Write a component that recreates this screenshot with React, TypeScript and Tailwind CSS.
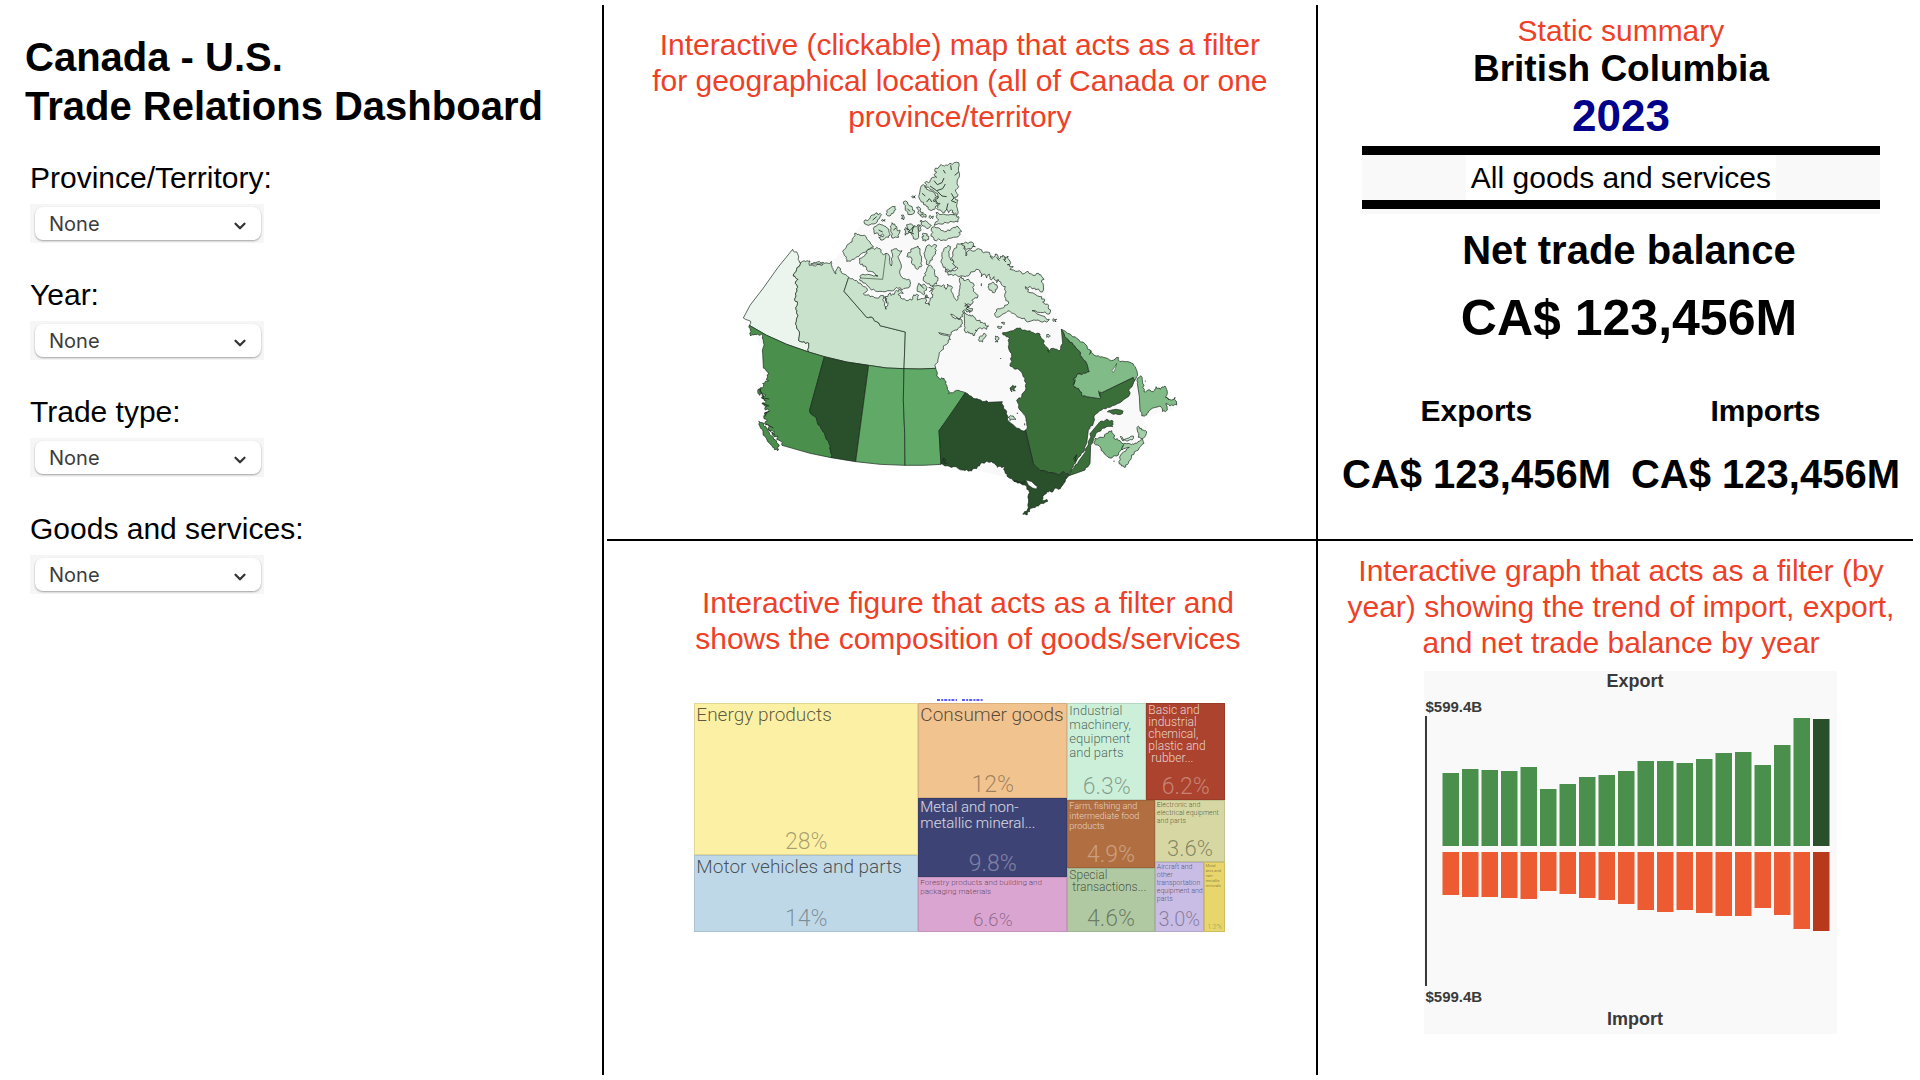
import React from "react";
import { ChevronDown } from "lucide-react";

type Pt = [number, number];

/* ---------- Map ---------- */

const parse = (s: string): Pt[] =>
  s
    .trim()
    .split(/\s+/)
    .map((p) => p.split(",").map(Number) as Pt);

// Breaks up short edges so that coastlines look ragged; long borders stay straight.
// The offset depends only on the edge's two ends, so neighbours share the same line.
function roughPath(points: Pt[], amount: number): string {
  const noise = (n: number) => {
    const v = Math.sin(n * 12.9898) * 43758.5453;
    return (v - Math.floor(v)) * 2 - 1;
  };
  const out: string[] = [];
  points.forEach((a, i) => {
    const b = points[(i + 1) % points.length];
    out.push(`${a[0]},${a[1]}`);
    const len = Math.hypot(b[0] - a[0], b[1] - a[1]);
    if (len > 36 || len < 5) return;
    const flip = a[0] > b[0] || (a[0] === b[0] && a[1] > b[1]);
    const [p, q] = flip ? [b, a] : [a, b];
    const nx = -(q[1] - p[1]) / len;
    const ny = (q[0] - p[0]) / len;
    const steps = len > 14 ? [0.25, 0.5, 0.75] : [0.5];
    const mids = steps.map((t) => {
      const k = noise(p[0] * 0.37 + p[1] * 0.71 + t * 5.3) * amount;
      return `${(p[0] + (q[0] - p[0]) * t + nx * k).toFixed(1)},${(p[1] + (q[1] - p[1]) * t + ny * k).toFixed(1)}`;
    });
    out.push(...(flip ? mids.reverse() : mids));
  });
  return `M${out.join("L")}Z`;
}

const LIGHT = "#c8e2cc";

const water =
  "188,298 208,330 300,338 338,304 372,250 402,214 470,176 520,154 566,140 570,110 612,60 686,38 690,120 688,200 692,250 726,276 760,306 840,318 850,350 942,380 944,424 962,480 990,536 1080,600 1150,630 1222,680 1244,700 1338,750 1330,780 1240,800 1250,850 1180,950 1100,900 1080,960 1010,980 900,1000 700,950 525,946 377,935 156,886 100,810 100,600 60,530";

const regions: { name: string; fill: string; rough: number; d: string[] }[] = [
  {
    name: "Yukon",
    fill: "#ebf5ee",
    rough: 3,
    d: [
      "188,298 202,310 208,333 212,338 200,358 190,378 204,388 196,400 203,412 196,432 194,450 202,455 198,478 204,496 197,520 200,534 208,545 206,572 218,576 236,579 236,606 170,583 110,556 58,526 62,514 52,510 40,504 60,466 100,414 144,352",
    ],
  },
  {
    name: "Northwest Territories",
    fill: LIGHT,
    rough: 3,
    d: [
      "212,338 222,332 240,333 238,346 256,348 280,342 242,342 262,336 284,340 300,340 304,334 306,348 312,362 318,372 324,350 330,354 334,368 356,382 342,424 410,502 430,505 450,527 526,546 524,600 522,656 470,654 416,646 350,636 283,620 236,606 236,579 218,576 206,572 208,545 200,534 197,520 204,496 198,478 202,455 194,450 196,432 203,412 196,400 204,388 190,378 200,358",
      "374,250 390,256 404,256 416,272 430,290 410,304 390,314 372,328 350,334 346,318 338,304 350,288 366,276",
    ],
  },
  {
    name: "Nunavut",
    fill: LIGHT,
    rough: 4,
    d: [
      "356,382 380,392 394,402 410,414 408,426 400,432 420,440 440,444 462,438 460,452 468,478 474,458 466,444 476,432 492,434 496,424 512,420 520,430 504,434 512,444 534,452 548,446 552,434 566,436 562,450 580,446 586,436 592,440 586,456 598,466 600,452 608,442 604,428 612,416 606,408 630,408 640,404 648,418 652,402 664,408 668,430 680,452 688,436 690,414 688,392 694,380 706,392 716,388 730,400 728,412 740,432 742,444 730,448 726,462 704,468 716,474 728,476 720,488 702,480 698,500 690,508 662,492 668,502 684,508 696,510 694,530 684,536 676,540 664,546 662,556 626,548 650,556 660,560 662,568 644,586 636,600 626,620 620,640 617,655 570,657 522,656 524,600 526,546 450,527 430,505 410,502 342,424",
      "430,294 410,304 400,320 388,326 392,344 408,350 410,360 430,366 444,378 420,374 392,376 390,392 410,404 424,420 450,424 480,422 500,412 514,420 530,414 540,404 536,388 516,382 510,360 512,340 504,320 516,302 500,296 484,300 488,320 484,348 480,320 468,310 460,314 450,296",
      "548,296 564,288 570,296 574,330 576,346 562,358 548,344 546,328 530,318 540,308",
      "590,288 620,286 616,306 606,324 598,340 590,344 584,320 586,300",
      "596,346 610,356 614,370 624,384 620,402 600,406 586,396 580,384 588,366",
      "566,400 586,406 590,420 580,434 562,424",
      "642,296 654,286 662,290 656,306 662,330 672,338 680,346 672,356 656,360 640,352 634,330 636,308",
      "680,286 696,280 704,288 708,318 716,300 736,302 746,296 760,308 772,306 780,314 790,322 796,312 808,326 818,316 824,330 834,318 842,338 832,344 850,350 840,358 862,364 884,370 894,364 904,372 916,376 926,370 936,380 942,388 934,396 940,408 940,420 932,426 914,414 886,410 900,428 930,440 944,448 938,456 952,462 962,480 958,492 940,488 906,482 938,498 958,508 950,516 924,510 900,514 876,506 850,490 832,484 812,498 800,502 794,490 800,478 820,474 824,466 836,460 824,440 826,410 812,396 804,388 800,398 792,380 784,390 778,372 770,384 764,372 754,380 750,362 738,358 720,372 706,380 680,376 660,374 646,366 648,358 662,366 684,354 672,344 668,330 668,306",
      "694,282 720,276 736,290 722,296 710,298",
      "686,38 688,70 682,90 686,110 676,120 684,134 674,142 684,150 680,170 684,190 670,194 664,180 656,188 650,176 640,188 620,176 630,160 616,150 624,138 608,120 588,112 584,98 596,98 604,84 620,82 612,74 620,66 614,60 630,46 644,48 660,40",
      "580,104 572,112 566,140 574,156 590,170 600,180 616,174 624,160 610,150 624,140 606,124 590,118",
      "618,188 640,192 670,194 686,200 684,216 660,214 640,222 612,226 626,210",
      "606,232 630,236 650,244 668,234 684,230 692,240 688,256 670,262 640,270 612,270 604,252",
      "570,214 586,212 604,226 596,234 580,228",
      "580,250 592,252 596,268 586,274 576,264",
      "530,224 544,222 552,232 564,224 566,262 550,266 542,248 526,256 522,238 534,240",
      "430,236 448,222 468,230 478,248 476,262 452,270 446,262 462,256 446,256 432,246",
      "486,218 494,222 502,242 510,240 506,262 486,264 482,240",
      "402,214 420,204 436,190 454,194 448,206 430,222 410,224",
      "470,182 496,170 492,186 480,198 468,192",
      "520,156 532,156 548,176 552,190 540,194 526,180",
      "560,172 572,176 578,194 566,192",
      "548,137 556,137 556,144 549,144",
      "514,196 522,200 520,210 514,206",
      "600,196 610,198 608,206 601,206",
      "572,194 588,194 588,202 576,202",
      "566,224 572,226 572,242 566,240",
      "458,208 465,208 465,214 458,214",
      "776,402 788,396 800,404 800,418 788,428 778,420",
      "702,484 716,496 730,500 744,512 760,520 776,528 770,538 752,534 736,540 734,556 720,548 706,546 704,520",
      "752,558 764,550 766,562 758,576 748,574",
      "796,558 804,560 804,576 796,576",
      "804,528 816,530 812,536 804,534",
      "814,518 824,518 822,524",
      "970,506 980,508 978,516 970,514",
      "950,554 957,554 957,562 950,562",
      "834,802 850,798 858,808 840,812",
    ],
  },
  {
    name: "British Columbia",
    fill: "#4a8f4c",
    rough: 3,
    d: [
      "58,526 110,556 170,583 236,606 283,620 239,780 243,792 255,800 262,818 275,838 285,855 297,880 302,900 303,923 240,910 156,886 158,878 150,872 140,868 144,858 132,860 126,848 134,846 116,840 118,828 104,822 112,812 102,806 104,790 118,782 104,776 112,768 96,762 108,752 94,742 108,736 92,730 86,720 100,710 98,700 116,692 108,688 116,672 108,662 100,650 98,610 100,576 94,552 80,554 62,558 60,540",
      "86,814 96,818 108,830 118,848 130,862 140,878 148,888 142,902 128,892 114,876 100,856 98,840 90,828",
      "84,718 92,716 90,736 84,730",
    ],
  },
  {
    name: "Alberta",
    fill: "#294f2b",
    rough: 3,
    d: [
      "283,620 350,636 416,646 377,935 303,923 302,900 297,880 285,855 275,838 262,818 255,800 243,792 239,780",
    ],
  },
  {
    name: "Saskatchewan",
    fill: "#60a967",
    rough: 0,
    d: ["416,646 470,654 522,656 520,750 524,850 525,946 450,943 377,935"],
  },
  {
    name: "Manitoba",
    fill: "#60a967",
    rough: 3,
    d: [
      "522,656 570,657 617,655 620,678 628,686 642,685 650,706 656,722 655,731 680,721 706,728 650,818 627,842 633,943 580,946 525,946 524,850 520,750",
    ],
  },
  {
    name: "Quebec",
    fill: "#3a6f3a",
    rough: 3,
    d: [
      "818,548 850,542 866,535 884,540 904,546 930,552 938,568 948,590 956,600 970,595 990,602 998,580 994,538 1010,565 1030,585 1045,600 1055,620 1070,640 1078,665 1060,670 1040,675 1032,690 1032,710 1048,720 1055,735 1070,740 1110,746 1107,730 1115,728 1210,682 1215,690 1200,715 1195,740 1170,758 1140,772 1115,780 1092,798 1090,820 1075,840 1070,880 1062,905 1040,930 1030,950 1017,975 1000,965 985,975 965,968 930,962 910,940 886,840 892,830 888,805 870,780 860,750 875,740 888,715 885,685 870,662 840,648 845,620 835,590 838,565 820,555",
      "1017,977 1065,960 1080,940 1082,885 1090,865 1105,845 1130,830 1148,830 1150,815 1130,808 1110,815 1085,845 1075,875 1067,905 1045,935 1030,956",
      "1132,786 1150,779 1180,784 1178,790 1150,793",
      "840,714 848,706 858,708 852,714 856,722 846,718 846,726",
    ],
  },
  {
    name: "Ontario",
    fill: "#294f2b",
    rough: 3,
    d: [
      "706,728 730,745 752,750 775,757 817,755 820,775 830,785 832,810 855,830 880,843 886,840 910,940 930,962 965,968 985,975 1000,965 1017,977 1000,1002 985,1018 975,1014 968,1026 950,1025 938,1038 936,1050 950,1048 952,1055 936,1060 920,1068 898,1080 892,1094 878,1092 892,1080 896,1050 896,1020 884,1005 855,995 835,982 825,965 820,950 802,952 794,940 785,935 755,938 748,948 735,955 720,962 700,960 670,950 645,948 634,940 640,925 633,943 627,842",
      "852,994 868,996 884,994 882,999 866,999",
    ],
  },
  {
    name: "Newfoundland and Labrador",
    fill: "#81bb87",
    rough: 3,
    d: [
      "994,538 1020,552 1040,565 1065,582 1084,608 1100,618 1120,622 1145,632 1165,622 1170,635 1200,637 1215,650 1222,670 1215,690 1210,682 1115,728 1107,730 1110,746 1070,740 1055,735 1048,720 1032,710 1032,690 1040,675 1060,670 1078,665 1070,640 1055,620 1045,600 1030,585 1010,565",
      "1232,677 1238,700 1242,725 1260,720 1270,725 1278,710 1290,718 1305,708 1312,730 1306,742 1325,750 1335,742 1340,765 1320,768 1308,760 1312,780 1298,785 1290,768 1260,780 1250,795 1235,797 1230,780 1228,740 1222,700 1222,685",
    ],
  },
  {
    name: "New Brunswick",
    fill: "#81bb87",
    rough: 3,
    d: [
      "1095,865 1120,862 1130,850 1145,842 1155,858 1152,865 1170,872 1184,882 1174,900 1160,918 1140,924 1120,905 1104,885 1092,880",
    ],
  },
  {
    name: "Nova Scotia",
    fill: "#a4d0a9",
    rough: 3,
    d: [
      "1184,880 1204,884 1220,880 1238,868 1242,880 1225,900 1205,915 1195,940 1182,952 1168,942 1172,915 1190,897 1198,892 1176,900",
      "1225,828 1235,840 1250,845 1240,865 1225,862 1222,840",
    ],
  },
  {
    name: "Prince Edward Island",
    fill: "#c8e2cc",
    rough: 3,
    d: ["1170,860 1184,868 1210,858 1206,870 1190,874 1176,870"],
  },
];

function CanadaMap() {
  return (
    <svg viewBox="0 0 1380 1140" className="h-auto w-full max-w-[460px]" role="img" aria-label="Map of Canada">
      <path d={roughPath(parse(water), 0)} fill="#f9f9fa" />
      {regions.map((r) => (
        <g key={r.name} fill={r.fill} stroke="#1c2a1e" strokeOpacity="0.75" strokeWidth="2.8" strokeLinejoin="round" className="cursor-pointer">
          {r.d.map((d, i) => (
            <path key={i} d={roughPath(parse(d), r.rough)} />
          ))}
        </g>
      ))}
      <g fill="#f9f9fa" stroke="#1c2a1e" strokeOpacity="0.7" strokeWidth="2">
        <path d="M888,990L905,995L914,1004L922,1010L919,1017L908,1014L895,1005Z" />
        <path d="M1146,662L1156,648L1160,640L1156,656L1150,668Z" />
      </g>
      <g fill="none" stroke="#1c2a1e" strokeOpacity="0.85" strokeWidth="3">
        <path d="M468,310L458,388L392,384" strokeOpacity="0.55" />
        <path d="M104,745l14,2M98,760l20,8M102,790l16,-6M108,822l22,12M96,735l8,18M112,836l24,20M90,720l12,22M104,800l8,-16" />
        <path d="M612,92l10,12l14,-6l6,-14M600,108l20,14l18,-6l8,-14M622,124l14,14l14,2M664,130l8,14l-8,8l14,6M576,130l10,8M590,156l8,-10l8,10M640,60l6,10M662,46l2,14M674,76l12,-10M650,176l4,-16" />
        <path d="M526,232l14,10l10,-12l-4,18M534,244l18,8M490,240l8,-6M446,240l12,6M440,200l-12,10M704,460l12,8l-8,8l14,8M710,474l12,-8M596,412l12,4l-10,10M570,404l12,12M532,176l8,8" />
        <path d="M464,440l6,20M586,440l12,4M780,318l8,10M800,322l8,10M820,328l8,8M1036,688l-4,16M1084,602l-6,12M1106,722l4,18M1030,928l10,-14l-6,20l8,-6M640,924l8,6l-8,8l12,2M952,600l6,8M1310,742l8,8" />
        <path d="M884,820v6M862,788v4M812,624v3M1152,932v4M1246,692v3M754,400v8" />
      </g>
    </svg>
  );
}

/* ---------- Treemap ---------- */

interface TileProps {
  label: string;
  share: string;
  box: string;
  labelStyle: string;
  shareStyle: string;
}

function Tile({ label, share, box, labelStyle, shareStyle }: TileProps) {
  return (
    <button
      type="button"
      className={`flex min-h-0 min-w-0 flex-col justify-between overflow-hidden border border-black/10 px-px text-left font-light ${box}`}
    >
      <span className={`whitespace-pre ${labelStyle}`}>{label}</span>
      <span className={`w-full text-center ${shareStyle}`}>{share}</span>
    </button>
  );
}

function Treemap() {
  return (
    <div className="flex h-[229px] w-full max-w-[531px] font-['Roboto',sans-serif]">
      <div className="flex min-w-0 grow-[224] basis-0 flex-col">
        <Tile label="Energy products" share="28%" box="grow-[153] basis-0 bg-[#fcf0a5]" labelStyle="text-[19px] leading-[22px] text-black/65" shareStyle="text-[23px] leading-6 text-black/35" />
        <Tile label="Motor vehicles and parts" share="14%" box="grow-[76] basis-0 bg-[#bfd8e7]" labelStyle="text-[19px] leading-[22px] text-black/65" shareStyle="text-[23px] leading-6 text-black/35" />
      </div>
      <div className="flex min-w-0 grow-[149] basis-0 flex-col">
        <Tile label="Consumer goods" share="12%" box="grow-[95] basis-0 bg-[#f0c38f]" labelStyle="text-[19px] leading-[22px] text-black/65" shareStyle="text-[23px] leading-6 text-black/35" />
        <Tile label={"Metal and non-\nmetallic mineral..."} share="9.8%" box="grow-[80] basis-0 bg-[#3e4376]" labelStyle="text-[15px] leading-4 text-white/80" shareStyle="text-[23px] leading-6 text-white/35" />
        <Tile label={"Forestry products and building and\npackaging materials"} share="6.6%" box="grow-[54] basis-0 bg-[#dba5d2]" labelStyle="text-[8px] leading-[9px] text-black/60" shareStyle="text-[19px] leading-[22px] text-black/35" />
      </div>
      <div className="flex min-w-0 grow-[158] basis-0 flex-col">
        <div className="flex grow-[97] basis-0">
          <Tile label={"Industrial\nmachinery,\nequipment\nand parts"} share="6.3%" box="grow basis-0 bg-[#cbefd8]" labelStyle="text-[13px] leading-[14px] text-black/60" shareStyle="text-[23px] leading-6 text-black/35" />
          <Tile label={"Basic and\nindustrial\nchemical,\nplastic and\n\u00a0rubber..."} share="6.2%" box="grow basis-0 bg-[#ab432e]" labelStyle="text-[12px] leading-3 text-white/75" shareStyle="text-[23px] leading-6 text-white/35" />
        </div>
        <div className="flex grow-[132] basis-0">
          <div className="flex min-w-0 grow-[88] basis-0 flex-col">
            <Tile label={"Farm, fishing and\nintermediate food\nproducts"} share="4.9%" box="grow-[68] basis-0 bg-[#b16f41]" labelStyle="text-[9px] leading-[10px] text-white/70" shareStyle="text-[23px] leading-6 text-white/35" />
            <Tile label={"Special\n\u00a0transactions..."} share="4.6%" box="grow-[64] basis-0 bg-[#b1c9a3]" labelStyle="text-[12px] leading-3 text-black/60" shareStyle="text-[23px] leading-6 text-black/40" />
          </div>
          <div className="flex min-w-0 grow-[71] basis-0 flex-col">
            <Tile label={"Electronic and\nelectrical equipment\nand parts"} share="3.6%" box="grow-[61] basis-0 bg-[#d6d7a2]" labelStyle="text-[7px] leading-2 text-black/60" shareStyle="text-[22px] leading-6 text-black/40" />
            <div className="flex grow-[71] basis-0">
              <Tile label={"Aircraft and\nother\ntransportation\nequipment and\nparts"} share="3.0%" box="grow-[51] basis-0 bg-[#c9bce5]" labelStyle="text-[7px] leading-2 text-black/60" shareStyle="text-[20px] leading-6 text-black/35" />
              <Tile label={"Metal\nores and\nnon-\nmetallic\nminerals"} share="1.2%" box="grow-[20] basis-0 bg-[#e8d56b]" labelStyle="text-[4px] leading-[5px] text-black/60" shareStyle="text-[7px] leading-2 text-black/35" />
            </div>
          </div>
        </div>
      </div>
    </div>
  );
}

/* ---------- Export / import chart ---------- */

const exportsByYear = [73, 77, 76, 75, 79, 57, 62, 69, 71, 75, 85, 85, 83, 87, 93, 94, 81, 101, 128, 127];
const importsByYear = [43, 45, 45, 46, 47, 39, 42, 46, 48, 52, 58, 60, 58, 61, 64, 64, 56, 63, 77, 79];

function TradeChart() {
  const last = exportsByYear.length - 1;
  return (
    <figure className="w-full max-w-[413px] bg-[#f9f9f9] pb-1 font-bold text-[#3a3a3a]">
      <figcaption className="pl-2 text-center text-lg leading-[21px]">Export</figcaption>
      <p className="mt-[6px] pl-px text-[15px] leading-[18px]">$599.4B</p>
      <svg viewBox="0 0 413 270" className="block w-full" role="img" aria-label="Exports and imports by year">
        <rect x="1" y="0" width="2" height="270" fill="#3a3a3a" />
        {exportsByYear.map((h, i) => (
          <rect key={i} x={18.5 + i * 19.5} y={130 - h} width="16.5" height={h} fill={i === last ? "#294f2b" : "#4a8f4c"} />
        ))}
        {importsByYear.map((h, i) => (
          <rect key={i} x={18.5 + i * 19.5} y="136" width="16.5" height={h} fill={i === last ? "#b9391c" : "#ec5b31"} />
        ))}
      </svg>
      <p className="mt-[2px] pl-px text-[15px] leading-[18px]">$599.4B</p>
      <p className="mt-[3px] pl-2 text-center text-lg leading-[21px]">Import</p>
    </figure>
  );
}

/* ---------- Page ---------- */

function Filter({ id, label }: { id: string; label: string }) {
  return (
    <div className="flex flex-col items-start gap-2">
      <label htmlFor={id} className="text-[30px] leading-9">
        {label}
      </label>
      <div className="relative w-[234px] bg-[#f6f6f6] pt-[3px] pr-[3px] pb-[3px] pl-[5px]">
        <select
          id={id}
          className="h-[33px] w-full appearance-none rounded-lg bg-white px-[14px] font-['Inter',sans-serif] text-[20px] leading-6 text-[#3c3c3c] shadow-[0_1px_2px_rgba(0,0,0,0.35)]"
        >
          <option>None</option>
        </select>
        <ChevronDown className="pointer-events-none absolute top-[13px] right-[15px] size-[18px] text-[#333]" strokeWidth={3} />
      </div>
    </div>
  );
}

function Note({ children, className }: { children: React.ReactNode; className: string }) {
  return <p className={`text-center text-[30px] leading-9 text-[#ee4027] ${className}`}>{children}</p>;
}

export default function App() {
  return (
    <main className="flex min-h-screen bg-white py-[5px] font-['Liberation_Sans',Arial,sans-serif] text-black">
      <aside className="w-[31.45%] shrink-0 border-r-2 border-black pt-7 pl-[25px]">
        <h1 className="text-[40px] leading-[49px] font-bold">
          Canada - U.S.
          <br />
          Trade Relations Dashboard
        </h1>
        <form className="mt-[29px] flex flex-col gap-[34px] pl-[5px]">
          <Filter id="province" label="Province/Territory:" />
          <Filter id="year" label="Year:" />
          <Filter id="trade-type" label="Trade type:" />
          <Filter id="goods" label="Goods and services:" />
        </form>
      </aside>

      <div className="flex min-w-0 flex-1 flex-col pl-[3px]">
        <div className="flex flex-1">
          <section className="flex w-[54.15%] flex-col items-center border-r-2 border-black pt-[22px] pr-[3px]">
            <Note className="max-w-[640px]">
              Interactive (clickable) map that acts as a filter for geographical location (all of Canada or one province/territory
            </Note>
            <div className="mt-[15px] flex w-full justify-center">
              <CanadaMap />
            </div>
          </section>

          <section className="flex flex-1 flex-col items-center pt-2 pl-1 text-center font-bold">
            <Note className="font-normal">Static summary</Note>
            <h2 className="text-[37px] leading-[40px]">British Columbia</h2>
            <p className="text-[44px] leading-[54px] text-[#00008b]">2023</p>
            <div className="mt-[3px] w-full max-w-[518px] bg-[#f9f9f9] pb-[5px]">
              <div className="flex justify-center border-y-[9px] border-black">
                <p className="bg-white px-[5px] text-[30px] leading-[45px] font-normal">All goods and services</p>
              </div>
            </div>
            <div className="pl-4">
              <h3 className="mt-3 text-[40px] leading-[48px]">Net trade balance</h3>
              <p className="mt-[13px] text-[50px] leading-[62px]">CA$ 123,456M</p>
            </div>
            <dl className="mt-11 flex justify-center gap-5">
              <div>
                <dt className="text-[30px] leading-9">Exports</dt>
                <dd className="mt-[21px] text-[40px] leading-[48px] whitespace-nowrap">CA$ 123,456M</dd>
              </div>
              <div>
                <dt className="text-[30px] leading-9">Imports</dt>
                <dd className="mt-[21px] text-[40px] leading-[48px] whitespace-nowrap">CA$ 123,456M</dd>
              </div>
            </dl>
          </section>
        </div>

        <hr className="mr-[7px] border-t-2 border-black" />

        <div className="flex flex-1">
          <section className="flex w-[54.15%] flex-col items-center border-r-2 border-black pt-11 pr-[3px]">
            <Note className="max-w-[600px] pl-4">Interactive figure that acts as a filter and shows the composition of goods/services</Note>
            <svg viewBox="0 0 46 2" className="mt-[42px] mb-[2px] h-[2px] w-[46px]" aria-hidden="true">
              <path d="M0,1H20M25,1H46" stroke="#2a2af0" strokeWidth="1.4" strokeDasharray="3 1.2 2 1" />
            </svg>
            <Treemap />
          </section>

          <section className="flex flex-1 flex-col items-center pt-3 pl-1">
            <Note className="max-w-[590px]">
              Interactive graph that acts as a filter (by year) showing the trend of import, export, and net trade balance by year
            </Note>
            <div className="mt-[10px] flex w-full justify-center pl-5">
              <TradeChart />
            </div>
          </section>
        </div>
      </div>
    </main>
  );
}
